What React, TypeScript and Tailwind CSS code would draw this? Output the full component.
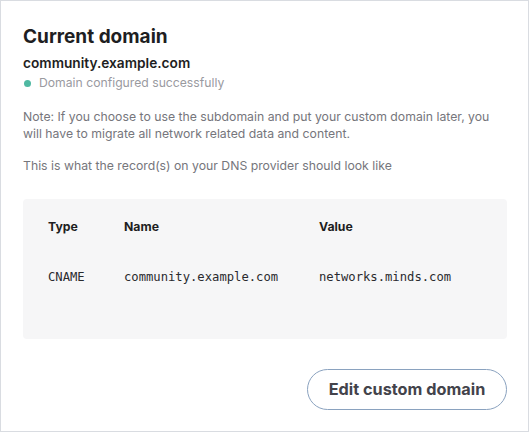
import React from "react";

export default function App() {
  return (
    <div
      className="w-[529px] h-[432px] border border-[#d9dce1] bg-white box-border"
      style={{ fontFamily: "Inter, 'Noto Sans', sans-serif" }}
    >
      <div className="pl-[22px] pr-[21px] pt-[23px]">
        <h1 className="text-[19px] leading-[26px] font-bold text-[#1e1e22]">
          Current domain
        </h1>
        <div className="mt-[3px] text-[13.7px] leading-[20px] font-semibold text-[#1e1e22]">
          community.example.com
        </div>
        <div className="mt-[1px] flex items-center gap-[8px] text-[12.2px] leading-[18px] text-[#9a9a9f]">
          <span className="w-[7px] h-[7px] rounded-full bg-[#4fb9a2] ml-[1px]" />
          <span>Domain configured successfully</span>
        </div>
        <p className="mt-[16px] text-[12.25px] leading-[17px] text-[#76767c]">
          Note: If you choose to use the subdomain and put your custom domain later, you will have to migrate all network related data and content.
        </p>
        <p className="mt-[15px] text-[12.25px] leading-[17px] text-[#76767c]">
          This is what the record(s) on your DNS provider should look like
        </p>
        <div className="mt-[25px] h-[140px] rounded-[4px] bg-[#f6f6f7] pl-[25px] pt-[19px]">
          <div className="grid grid-cols-[76px_195px_1fr] text-[12.25px] leading-[18px] font-bold text-[#1e1e22]">
            <div>Type</div>
            <div>Name</div>
            <div>Value</div>
          </div>
          <div
            className="mt-[32px] grid grid-cols-[76px_195px_1fr] text-[12.2px] leading-[18px] text-[#2a2a2e]"
            style={{ fontFamily: "'DejaVu Sans Mono', monospace" }}
          >
            <div>CNAME</div>
            <div>community.example.com</div>
            <div>networks.minds.com</div>
          </div>
        </div>
        <div className="mt-[30px] flex justify-end">
          <button className="w-[200px] h-[41px] rounded-full border border-[#8aa2bf] bg-white text-[16.25px] font-bold text-[#43434b]">
            Edit custom domain
          </button>
        </div>
      </div>
    </div>
  );
}
